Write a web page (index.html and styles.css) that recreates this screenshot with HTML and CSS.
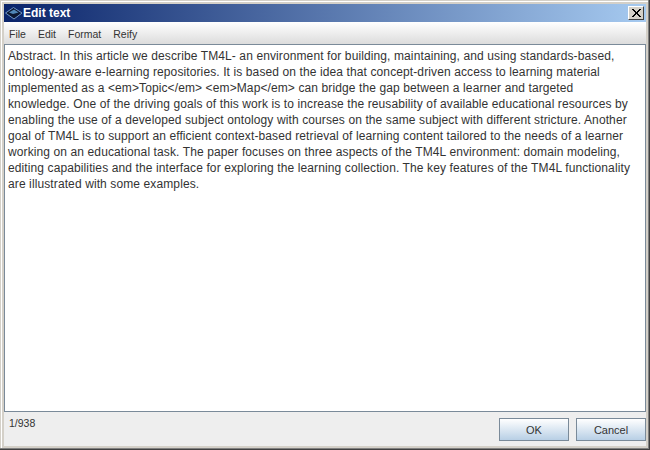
FILE: index.html
```html
<!DOCTYPE html>
<html lang="en">
<head>
    <meta charset="UTF-8">
    <title>Edit text</title>
    <link rel="stylesheet" href="styles.css">
</head>
<body>
    <div class="window">
        <div class="title-bar">
            <svg class="title-icon" width="18" height="13" viewBox="0 0 18 13">
                <path d="M0.5 6 L8.5 0.5 L17 6 L9 12 Z" fill="#0c1732" stroke="#6f96c8" stroke-width="1"/>
                <path d="M4 5.5 L9 2.5 L13.5 5.5 L8 7 Z" fill="#4f86b8"/>
            </svg>
            <span class="title-text">Edit text</span>
            <button class="close-button">
                <svg width="10" height="9" viewBox="0 0 10 9">
                    <path d="M1 0 L9 8 M2 0 L10 8 M9 0 L1 8 M10 0 L2 8" stroke="#000" stroke-width="1" fill="none"/>
                </svg>
            </button>
        </div>
        <div class="menu-bar">
            <span class="menu-item">File</span>
            <span class="menu-item">Edit</span>
            <span class="menu-item">Format</span>
            <span class="menu-item">Reify</span>
        </div>
        <div class="text-area">Abstract. In this article we describe TM4L- an environment for building, maintaining, and using standards-based,<br>ontology-aware e-learning repositories. It is based on the idea that concept-driven access to learning material<br>implemented as a &lt;em&gt;Topic&lt;/em&gt; &lt;em&gt;Map&lt;/em&gt; can bridge the gap between a learner and targeted<br>knowledge. One of the driving goals of this work is to increase the reusability of available educational resources by<br>enabling the use of a developed subject ontology with courses on the same subject with different stricture. Another<br>goal of TM4L is to support an efficient context-based retrieval of learning content tailored to the needs of a learner<br>working on an educational task. The paper focuses on three aspects of the TM4L environment: domain modeling,<br>editing capabilities and the interface for exploring the learning collection. The key features of the TM4L functionality<br>are illustrated with some examples.</div>
        <div class="bottom-bar">
            <span class="counter">1/938</span>
            <div class="buttons">
                <button class="dialog-button">OK</button>
                <button class="dialog-button">Cancel</button>
            </div>
        </div>
    </div>
</body>
</html>
```

FILE: styles.css
```css
html, body {
    margin: 0;
    height: 100%;
}

body {
    width: 650px;
    height: 450px;
    overflow: hidden;
    font-family: "Liberation Sans", Arial, sans-serif;
    font-size: 12px;
    color: #333;
}

.window {
    box-sizing: border-box;
    width: 650px;
    height: 450px;
    display: flex;
    flex-direction: column;
    padding: 4px;
    background-color: #d4d0c8;
    box-shadow: inset -1px -1px 0 #404040, inset -2px -2px 0 #808080, inset 1px 1px 0 #d4d0c8, inset 2px 2px 0 #ffffff;
}

.title-bar {
    height: 18px;
    flex: none;
    display: flex;
    align-items: center;
    background: linear-gradient(to right, #0a246a, #a6caf0);
    color: #fff;
}

.title-icon {
    margin-left: 1px;
}

.title-text {
    font-size: 12px;
    font-weight: bold;
}

.close-button {
    margin-left: auto;
    margin-right: 2px;
    width: 16px;
    height: 14px;
    padding: 0;
    display: flex;
    align-items: center;
    justify-content: center;
    background-color: #d4d0c8;
    border: 1px solid;
    border-color: #fff #404040 #404040 #fff;
}

.menu-bar {
    height: 21px;
    flex: none;
    display: flex;
    align-items: center;
    gap: 12px;
    padding: 1px 5px 0;
    background: linear-gradient(to bottom, #ffffff, #dcdcdc);
    font-size: 10.5px;
    color: #333;
}

.text-area {
    flex: 1;
    background-color: #fff;
    border: 1px solid #7a8a99;
    padding: 3px 3px;
    line-height: 16px;
    letter-spacing: 0.11px;
    white-space: nowrap;
    overflow: hidden;
}

.bottom-bar {
    height: 34px;
    flex: none;
    display: flex;
    justify-content: space-between;
    background-color: #eeeeee;
}

.counter {
    font-size: 10.5px;
    padding: 5px 0 0 5px;
}

.buttons {
    display: flex;
    gap: 7px;
    padding-top: 6px;
}

.dialog-button {
    width: 70px;
    height: 23px;
    padding: 0;
    font-family: "Liberation Sans", Arial, sans-serif;
    font-size: 11px;
    color: #333;
    background: linear-gradient(to bottom, #ffffff, #b8cfe5);
    border: 1px solid #7a8a99;
}
```
